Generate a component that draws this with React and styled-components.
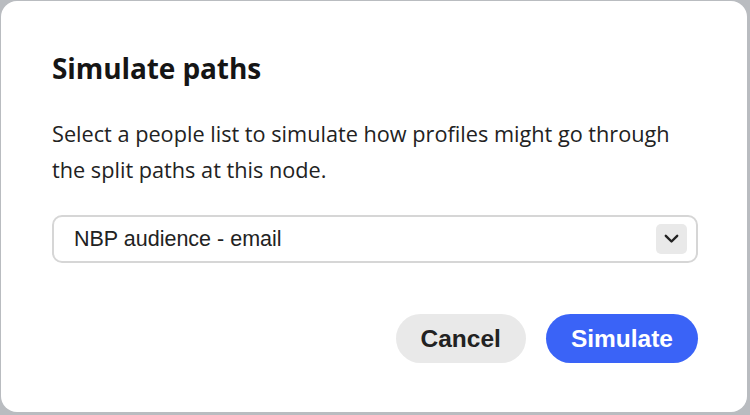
import styled, { createGlobalStyle } from 'styled-components';

const GlobalStyle = createGlobalStyle`
  html, body {
    margin: 0;
    padding: 0;
    background: #b9bcc0;
  }
  * {
    box-sizing: border-box;
  }
`;

const Backdrop = styled.div`
  width: 750px;
  height: 415px;
  padding: 1px 3px 3px 1px;
  display: flex;
`;

const Dialog = styled.section`
  flex: 1;
  background: #fff;
  border-radius: 16px;
  padding: 49px 49px 0 51px;
  display: flex;
  flex-direction: column;
`;

const Title = styled.h2`
  margin: 0;
  font-family: 'Open Sans', sans-serif;
  font-size: 28px;
  font-weight: 700;
  line-height: 36px;
  letter-spacing: -0.1px;
  color: #151515;
`;

const Description = styled.p`
  margin: 30px 0 0;
  font-family: 'Open Sans', sans-serif;
  font-size: 21.7px;
  font-weight: 400;
  line-height: 36px;
  color: #222;
`;

const Picker = styled.div`
  margin-top: 27px;
  height: 48px;
  border: 2px solid #d6d6d6;
  border-radius: 10px;
  display: flex;
  align-items: center;
  justify-content: space-between;
  padding: 0 9px 0 20px;
`;

const PickerValue = styled.span`
  font-family: 'Liberation Sans', Arial, sans-serif;
  font-size: 21.5px;
  color: #222;
`;

const ChevronButton = styled.span`
  width: 31px;
  height: 30px;
  border-radius: 5px;
  background: #e9e9e9;
  display: flex;
  align-items: center;
  justify-content: center;
`;

const Actions = styled.div`
  margin-top: 51px;
  display: flex;
  justify-content: flex-end;
  gap: 20px;
`;

const Button = styled.button`
  height: 49px;
  border: none;
  border-radius: 25px;
  padding: 0 25px;
  font-family: 'Liberation Sans', Arial, sans-serif;
  font-size: 24.5px;
  font-weight: 700;
  background: ${(p) => (p.$primary ? '#3a63f7' : '#e9e9e9')};
  color: ${(p) => (p.$primary ? '#fff' : '#222')};
  cursor: pointer;
`;

const App = () => {
  return (
    <>
      <GlobalStyle />
      <Backdrop>
        <Dialog>
          <Title>Simulate paths</Title>
          <Description>
            Select a people list to simulate how profiles might go through
            <br />
            the split paths at this node.
          </Description>
          <Picker>
            <PickerValue>NBP audience - email</PickerValue>
            <ChevronButton>
              <svg width="15" height="10" viewBox="0 0 15 10" fill="none">
                <path d="M1.8 1.8L7.5 7.5L13.2 1.8" stroke="#222" strokeWidth="2.4" strokeLinecap="round" strokeLinejoin="round" />
              </svg>
            </ChevronButton>
          </Picker>
          <Actions>
            <Button>Cancel</Button>
            <Button $primary>Simulate</Button>
          </Actions>
        </Dialog>
      </Backdrop>
    </>
  );
};

export default App;
